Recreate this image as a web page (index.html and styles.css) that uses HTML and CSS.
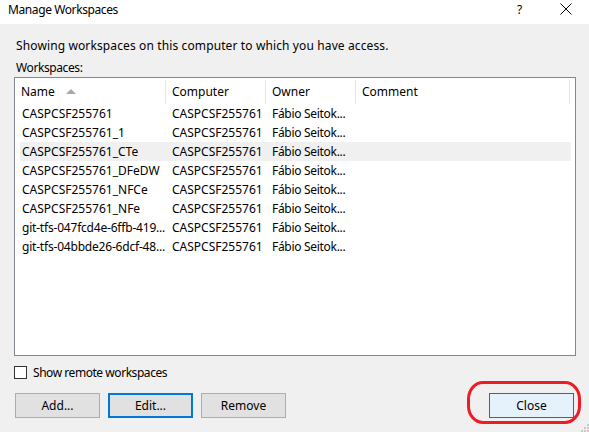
FILE: index.html
```html
<!DOCTYPE html>
<html>
<head>
<meta charset="utf-8">
<link rel="stylesheet" href="styles.css">
</head>
<body>
<div class="window">
  <div class="titlebar">
    <span class="title">Manage Workspaces</span>
    <span class="help">?</span>
    <svg class="close-x" width="12" height="12" viewBox="0 0 12 12"><path d="M0.5 0.5 L11.5 11.5 M11.5 0.5 L0.5 11.5" stroke="#000" stroke-width="1" fill="none"/></svg>
  </div>
  <div class="content">
    <p class="intro">Showing workspaces on this computer to which you have access.</p>
    <p class="label">Workspaces:</p>
    <div class="listview">
      <div class="lv-header">
        <div class="hcell hname">Name<span class="sort"></span></div>
        <div class="hcell">Computer</div>
        <div class="hcell">Owner</div>
        <div class="hcell">Comment</div>
      </div>
      <div class="lv-rows">
        <div class="row"><span class="c cname">CASPCSF255761</span><span class="c">CASPCSF255761</span><span class="c owner">Fábio Seitok...</span><span class="c"></span></div>
        <div class="row"><span class="c cname">CASPCSF255761_1</span><span class="c">CASPCSF255761</span><span class="c owner">Fábio Seitok...</span><span class="c"></span></div>
        <div class="row sel"><span class="c cname">CASPCSF255761_CTe</span><span class="c">CASPCSF255761</span><span class="c owner">Fábio Seitok...</span><span class="c"></span></div>
        <div class="row"><span class="c cname">CASPCSF255761_DFeDW</span><span class="c">CASPCSF255761</span><span class="c owner">Fábio Seitok...</span><span class="c"></span></div>
        <div class="row"><span class="c cname">CASPCSF255761_NFCe</span><span class="c">CASPCSF255761</span><span class="c owner">Fábio Seitok...</span><span class="c"></span></div>
        <div class="row"><span class="c cname">CASPCSF255761_NFe</span><span class="c">CASPCSF255761</span><span class="c owner">Fábio Seitok...</span><span class="c"></span></div>
        <div class="row"><span class="c cname trunc">git-tfs-047fcd4e-6ffb-419...</span><span class="c">CASPCSF255761</span><span class="c owner">Fábio Seitok...</span><span class="c"></span></div>
        <div class="row"><span class="c cname trunc">git-tfs-04bbde26-6dcf-48...</span><span class="c">CASPCSF255761</span><span class="c owner">Fábio Seitok...</span><span class="c"></span></div>
      </div>
    </div>
    <label class="check"><span class="box"></span><span class="check-text">Show remote workspaces</span></label>
    <div class="buttons">
      <button class="btn">Add...</button>
      <button class="btn focused">Edit...</button>
      <button class="btn">Remove</button>
      <span class="spacer"></span>
      <button class="btn default">Close</button>
    </div>
  </div>
  <div class="annotation"></div>
  <svg class="grip" width="8" height="8" viewBox="0 0 8 8">
    <rect x="6" y="0" width="2" height="2" fill="#c8c8c8"/>
    <rect x="3" y="3" width="2" height="2" fill="#c8c8c8"/>
    <rect x="6" y="3" width="2" height="2" fill="#c8c8c8"/>
    <rect x="0" y="6" width="2" height="2" fill="#c8c8c8"/>
    <rect x="3" y="6" width="2" height="2" fill="#c8c8c8"/>
    <rect x="6" y="6" width="2" height="2" fill="#c8c8c8"/>
  </svg>
</div>
</body>
</html>
```
FILE: styles.css
```css
* { box-sizing: border-box; }
html, body { margin: 0; padding: 0; }
body {
  width: 589px;
  height: 432px;
  overflow: hidden;
  background: #f0f0f0;
  font-family: "Noto Sans", "Open Sans", sans-serif;
  font-size: 12px;
  color: #000;
}
.window {
  position: relative;
  width: 589px;
  height: 432px;
}
.titlebar {
  height: 24px;
  background: #fff;
  display: flex;
  align-items: center;
  padding-left: 8px;
}
.title { flex: 1; line-height: 16px; margin-top: -5px; letter-spacing: -0.4px; }
.help { width: 10px; margin-right: 33px; line-height: 16px; margin-top: -5px; }
.close-x { margin-right: 17px; margin-top: -6px; }
.content {
  padding: 0 14px 0 14px;
}
.intro {
  margin: 14px 0 0 2px;
  line-height: 16px;
  letter-spacing: 0.12px;
}
.label {
  margin: 6px 0 0 2px;
  line-height: 16px;
  letter-spacing: -0.4px;
}
.listview {
  margin-top: 1px;
  width: 562px;
  height: 279px;
  background: #fff;
  border: 1px solid #828790;
}
.lv-header {
  display: grid;
  grid-template-columns: 151px 100px 90px 214px;
  height: 26px;
}
.hcell {
  position: relative;
  padding-left: 6px;
  padding-top: 1px;
  line-height: 25px;
  white-space: nowrap;
}
.hcell::after {
  content: "";
  position: absolute;
  right: 0;
  top: 2px;
  bottom: 0;
  width: 1px;
  background: #e5e5e5;
}
.sort {
  position: absolute;
  left: 51px;
  top: 11px;
  width: 0;
  height: 0;
  border-left: 5px solid transparent;
  border-right: 5px solid transparent;
  border-bottom: 5px solid #a9a9a9;
}
.lv-rows {
  margin-left: 5px;
  width: 551px;
}
.row {
  display: grid;
  grid-template-columns: 146px 100px 90px 215px;
  height: 19px;
}
.row.sel { background: #f0f0f0; }
.c {
  padding-left: 6px;
  padding-top: 1px;
  line-height: 18px;
  white-space: nowrap;
  overflow: hidden;
}
.c.cname { padding-left: 2px; }
.c.trunc { letter-spacing: -0.2px; }
.c.owner { letter-spacing: -0.3px; }
.check {
  display: flex;
  align-items: center;
  margin-top: 10px;
  height: 13px;
  line-height: 16px;
}
.check-text { letter-spacing: -0.45px; }
.box {
  width: 13px;
  height: 13px;
  border: 1px solid #333;
  background: #fff;
  margin-right: 6px;
}
.buttons {
  display: flex;
  gap: 8px;
  margin-top: 14px;
  padding-left: 1px;
}
.spacer { flex: 1; }
.btn {
  width: 85px;
  height: 25px;
  font-family: inherit;
  font-size: 12px;
  color: #000;
  background: #e1e1e1;
  border: 1px solid #adadad;
  padding: 0;
  margin: 0;
}
.btn.focused { border: 2px solid #0078d7; }
.btn.default {
  background: #e5f1fb;
  border: 1px solid #0078d7;
  margin-right: 1px;
}
.annotation {
  position: absolute;
  left: 467px;
  top: 381px;
  width: 114px;
  height: 43px;
  border: 3px solid #ed1c24;
  border-radius: 16px / 18px;
}
.grip {
  position: absolute;
  right: 0;
  bottom: 0;
}
```
